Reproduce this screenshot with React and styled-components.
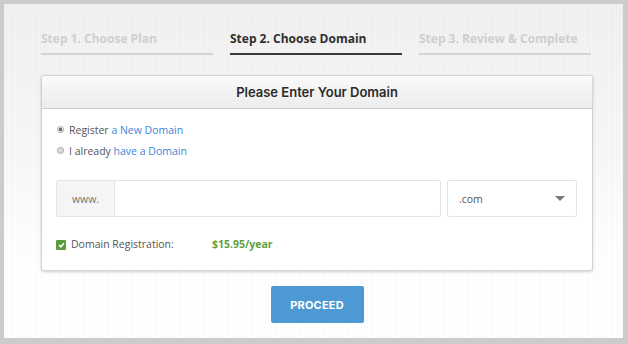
import React from "react";
import styled, { createGlobalStyle } from "styled-components";

const GlobalStyle = createGlobalStyle`
    html, body {
        margin: 0;
        padding: 0;
        background: #cccccc;
    }
    body {
        font-family: "Open Sans", "Liberation Sans", sans-serif;
    }
`;

const Frame = styled.div`
    width: 628px;
    height: 344px;
    box-sizing: border-box;
    padding: 4px 5px 6px 4px;
    background: #cccccc;
`;

const Page = styled.div`
    height: 100%;
    box-sizing: border-box;
    padding: 27px 30px 0 37px;
    background:
        repeating-linear-gradient(90deg, rgba(0, 0, 0, 0.018) 0 1px, transparent 1px 3px),
        linear-gradient(180deg, #f1f1f1 0%, #f8f8f8 45%, #ffffff 75%);
    display: flex;
    flex-direction: column;
`;

const Steps = styled.div`
    display: grid;
    grid-template-columns: repeat(3, 172px);
    column-gap: 17px;
`;

const Step = styled.div`
    font-size: 12px;
    font-weight: 700;
    line-height: 16px;
    padding-bottom: 6px;
    color: ${(p) => (p.$active ? "#2f2f2f" : "#cfcfcf")};
    border-bottom: 2px solid ${(p) => (p.$active ? "#3a3a3a" : "#d3d3d3")};
`;

const Panel = styled.div`
    margin-top: 20px;
    width: 552px;
    box-sizing: border-box;
    border: 1px solid #d4d4d4;
    border-radius: 3px;
    background: #fff;
    box-shadow: 0 1px 3px rgba(0, 0, 0, 0.18);
`;

const PanelHeader = styled.div`
    height: 32px;
    display: flex;
    align-items: center;
    justify-content: center;
    font-family: "Inter", "Open Sans", sans-serif;
    font-size: 13px;
    font-weight: 600;
    color: #2b2b2b;
    background: linear-gradient(180deg, #fafafa 0%, #ececec 100%);
    border-bottom: 1px solid #cfcfcf;
    border-radius: 3px 3px 0 0;
`;

const PanelBody = styled.div`
    padding: 10px 15px 18px 14px;
`;

const RadioRow = styled.label`
    display: flex;
    align-items: center;
    gap: 5px;
    height: 21px;
    font-size: 10.5px;
    color: #555;
`;

const Radio = styled.span`
    width: 5px;
    height: 5px;
    border-radius: 50%;
    border: 1px solid #a8a8a8;
    background: ${(p) => (p.$checked ? "radial-gradient(circle, #6f6f6f 0 1.4px, #e8e8e8 1.8px)" : "#dcdcdc")};
    margin-left: 1px;
`;

const Link = styled.span`
    color: #3d85d8;
`;

const InputGroup = styled.div`
    margin-top: 19px;
    display: flex;
    gap: 6px;
    height: 37px;
`;

const DomainField = styled.div`
    display: flex;
    width: 385px;
    box-sizing: border-box;
    border: 1px solid #e4e4e4;
    border-radius: 2px;
    background: #fff;
`;

const Addon = styled.div`
    width: 57px;
    display: flex;
    align-items: center;
    justify-content: center;
    background: #f5f5f5;
    border-right: 1px solid #e4e4e4;
    font-size: 10.5px;
    color: #777;
`;

const Input = styled.div`
    flex: 1;
`;

const Select = styled.div`
    width: 130px;
    box-sizing: border-box;
    border: 1px solid #e4e4e4;
    border-radius: 2px;
    display: flex;
    align-items: center;
    justify-content: space-between;
    padding: 0 11px 0 11px;
    font-size: 10.5px;
    color: #555;
`;

const Caret = styled.span`
    width: 0;
    height: 0;
    border-left: 5px solid transparent;
    border-right: 5px solid transparent;
    border-top: 5px solid #777;
`;

const RegRow = styled.div`
    margin-top: 20px;
    display: flex;
    align-items: center;
    font-size: 10.5px;
    line-height: 15px;
    color: #555;
`;

const Check = styled.span`
    width: 10px;
    height: 10px;
    border-radius: 1px;
    background: #5c9c3f;
    display: inline-flex;
    align-items: center;
    justify-content: center;
    margin-right: 5px;
`;

const RegLabel = styled.span`
    width: 141px;
`;

const Price = styled.span`
    color: #62a03f;
    font-weight: 700;
`;

const Footer = styled.div`
    width: 552px;
    display: flex;
    justify-content: center;
    padding-top: 15px;
`;

const Button = styled.button`
    width: 93px;
    height: 37px;
    border: none;
    border-radius: 2px;
    background: #4d99d3;
    color: #fff;
    font-family: "Inter", "Open Sans", sans-serif;
    font-size: 11px;
    font-weight: 700;
    letter-spacing: 0.2px;
`;

export default function App() {
    return (
        <>
            <GlobalStyle />
            <Frame>
                <Page>
                    <Steps>
                        <Step>Step 1. Choose Plan</Step>
                        <Step $active>Step 2. Choose Domain</Step>
                        <Step>Step 3. Review &amp; Complete</Step>
                    </Steps>
                    <Panel>
                        <PanelHeader>Please Enter Your Domain</PanelHeader>
                        <PanelBody>
                            <RadioRow>
                                <Radio $checked />
                                <span>
                                    Register <Link>a New Domain</Link>
                                </span>
                            </RadioRow>
                            <RadioRow>
                                <Radio />
                                <span>
                                    I already <Link>have a Domain</Link>
                                </span>
                            </RadioRow>
                            <InputGroup>
                                <DomainField>
                                    <Addon>www.</Addon>
                                    <Input />
                                </DomainField>
                                <Select>
                                    <span>.com</span>
                                    <Caret />
                                </Select>
                            </InputGroup>
                            <RegRow>
                                <Check>
                                    <svg width="7" height="6" viewBox="0 0 7 6">
                                        <path d="M1 3l1.8 1.8L6 1.2" fill="none" stroke="#fff" strokeWidth="1.5" />
                                    </svg>
                                </Check>
                                <RegLabel>Domain Registration:</RegLabel>
                                <Price>$15.95/year</Price>
                            </RegRow>
                        </PanelBody>
                    </Panel>
                    <Footer>
                        <Button>PROCEED</Button>
                    </Footer>
                </Page>
            </Frame>
        </>
    );
}
